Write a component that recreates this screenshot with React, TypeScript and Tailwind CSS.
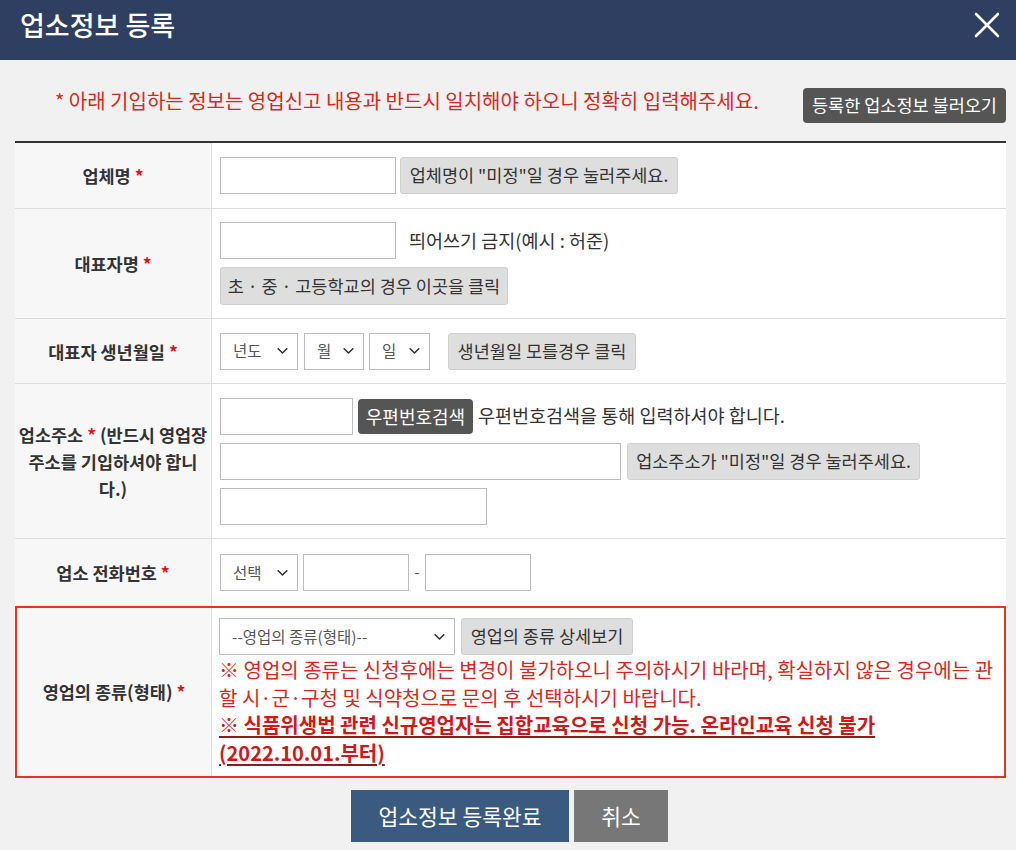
import React from "react";

const FONT = { fontFamily: '"Noto Sans CJK KR", "Noto Sans", sans-serif' };

function Chevron() {
  return (
    <svg className="pointer-events-none absolute right-[10px] top-1/2 -translate-y-1/2" width="11" height="7" viewBox="0 0 11 7">
      <path d="M1.2 1.2 L5.5 5.5 L9.8 1.2" fill="none" stroke="#333" strokeWidth="1.6" strokeLinecap="round" strokeLinejoin="round" />
    </svg>
  );
}

function Sel({ w, label }: { w: string; label: string }) {
  return (
    <div className={`relative h-[37px] ${w} shrink-0`}>
      <select
        className="h-full w-full appearance-none border border-[#bdbdbd] bg-white pl-[12px] text-[15.5px] text-[#555] outline-none"
        style={FONT}
        defaultValue={label}
      >
        <option>{label}</option>
      </select>
      <Chevron />
    </div>
  );
}

function Inp({ w }: { w: string }) {
  return <input className={`h-[37px] ${w} shrink-0 border border-[#bdbdbd] bg-white outline-none`} />;
}

function GBtn({ children, w }: { children: React.ReactNode; w: string }) {
  return (
    <button className={`h-[37px] ${w} shrink-0 whitespace-nowrap rounded-[3px] border border-[#cfcfcf] bg-[#dedede] text-[17.5px] text-[#333]`} style={FONT}>
      {children}
    </button>
  );
}

function Label({ children }: { children: React.ReactNode }) {
  return (
    <div className="flex w-[197px] shrink-0 items-center justify-center border-r border-[#dddddd] bg-[#f7f7f7] px-[3px] text-center text-[17.5px] font-bold leading-[27px] text-[#333]">
      <div>{children}</div>
    </div>
  );
}

const Star = () => <span className="text-[#e01515]">*</span>;

export default function App() {
  return (
    <div className="min-h-[850px] w-[1016px] bg-[#f1f1f1]" style={FONT}>
      {/* header */}
      <div className="flex h-[60px] items-center justify-between bg-[#2e3f62] pb-[10px] pl-[20px] pr-[16px]">
        <div className="text-[27px] font-medium text-white">업소정보 등록</div>
        <svg width="26" height="26" viewBox="0 0 26 26" className="mt-[-1px]">
          <path d="M2 2 L24 24 M24 2 L2 24" stroke="#fff" strokeWidth="2.6" strokeLinecap="round" />
        </svg>
      </div>

      <div className="pl-[15px] pr-[10px]">
        {/* notice */}
        <div className="flex h-[81px] items-end pb-[18px]">
          <div className="mb-[8px] whitespace-nowrap pl-[40px] text-[20px] leading-[28px] text-[#d8281e]">
            * 아래 기입하는 정보는 영업신고 내용과 반드시 일치해야 하오니 정확히 입력해주세요.
          </div>
          <button className="ml-auto h-[35px] w-[203px] whitespace-nowrap rounded-[4px] bg-[#555555] text-[17.5px] text-white" style={FONT}>
            등록한 업소정보 불러오기
          </button>
        </div>

        {/* table */}
        <div className="border-t-2 border-[#333]">
          {/* row 1 */}
          <div className="flex h-[66px] border-b border-[#dddddd] bg-white">
            <Label>
              업체명 <Star />
            </Label>
            <div className="flex flex-1 items-center gap-[4px] pl-[8px]">
              <Inp w="w-[176px]" />
              <GBtn w="w-[278px]">업체명이 "미정"일 경우 눌러주세요.</GBtn>
            </div>
          </div>

          {/* row 2 */}
          <div className="flex h-[110px] border-b border-[#dddddd] bg-white">
            <Label>
              대표자명 <Star />
            </Label>
            <div className="flex flex-1 flex-col justify-center gap-[8px] pl-[8px]">
              <div className="flex items-center gap-[13px]">
                <Inp w="w-[176px]" />
                <span className="text-[18.5px] text-[#333]">띄어쓰기 금지(예시 : 허준)</span>
              </div>
              <GBtn w="w-[288px] h-[38px]">초 · 중 · 고등학교의 경우 이곳을 클릭</GBtn>
            </div>
          </div>

          {/* row 3 */}
          <div className="flex h-[65px] border-b border-[#dddddd] bg-white">
            <Label>
              대표자 생년월일 <Star />
            </Label>
            <div className="flex flex-1 items-center pl-[8px]">
              <Sel w="w-[78px]" label="년도" />
              <div className="w-[6px]" />
              <Sel w="w-[60px]" label="월" />
              <div className="w-[5px]" />
              <Sel w="w-[61px]" label="일" />
              <div className="w-[18px]" />
              <GBtn w="w-[188px]">생년월일 모를경우 클릭</GBtn>
            </div>
          </div>

          {/* row 4 */}
          <div className="flex h-[155px] border-b border-[#dddddd] bg-white">
            <Label>
              업소주소 <Star /> (반드시 영업장 주소를 기입하셔야 합니다.)
            </Label>
            <div className="flex flex-1 flex-col justify-center gap-[8px] pl-[8px]">
              <div className="flex items-center">
                <Inp w="w-[133px]" />
                <button className="ml-[5px] h-[35px] w-[115px] whitespace-nowrap rounded-[4px] bg-[#555555] text-[18px] text-white" style={FONT}>
                  우편번호검색
                </button>
                <span className="ml-[5px] whitespace-nowrap text-[18.5px] text-[#333]">우편번호검색을 통해 입력하셔야 합니다.</span>
              </div>
              <div className="flex items-center gap-[6px]">
                <Inp w="w-[401px]" />
                <GBtn w="w-[293px]">업소주소가 "미정"일 경우 눌러주세요.</GBtn>
              </div>
              <Inp w="w-[267px]" />
            </div>
          </div>

          {/* row 5 */}
          <div className="flex h-[67px] bg-white">
            <Label>
              업소 전화번호 <Star />
            </Label>
            <div className="flex flex-1 items-center pl-[8px]">
              <Sel w="w-[78px]" label="선택" />
              <div className="w-[5px]" />
              <Inp w="w-[106px]" />
              <span className="w-[16px] text-center text-[15px] text-[#555]">-</span>
              <Inp w="w-[106px]" />
            </div>
          </div>

          {/* row 6 */}
          <div className="flex h-[172px] border-2 border-[#e8341c] bg-white">
            <div className="flex w-[195px] shrink-0 items-center justify-center border-r border-[#dddddd] bg-[#f7f7f7] text-[17.5px] font-bold text-[#333]">
              <div>
                영업의 종류(형태) <Star />
              </div>
            </div>
            <div className="flex-1 pl-[7px] pr-[4px] pt-[10px]">
              <div className="flex items-center gap-[6px]">
                <Sel w="w-[236px]" label="--영업의 종류(형태)--" />
                <GBtn w="w-[172px]">영업의 종류 상세보기</GBtn>
              </div>
              <div className="mt-[1px] text-[20px] leading-[27.7px] text-[#d8281e]">
                <div>※ 영업의 종류는 신청후에는 변경이 불가하오니 주의하시기 바라며, 확실하지 않은 경우에는 관할 시·군·구청 및 식약청으로 문의 후 선택하시기 바랍니다.</div>
                <div className="font-bold text-[#d01818] underline decoration-[#8a1c1c] decoration-[1.5px] underline-offset-[3px]">
                  ※ 식품위생법 관련 신규영업자는 집합교육으로 신청 가능. 온라인교육 신청 불가 (2022.10.01.부터)
                </div>
              </div>
            </div>
          </div>
        </div>

        {/* bottom buttons */}
        <div className="mt-[12px] flex justify-center gap-[5px] pr-[2px]">
          <button className="h-[52px] w-[218px] whitespace-nowrap bg-[#3b5a7f] text-[21.5px] text-white" style={FONT}>
            업소정보 등록완료
          </button>
          <button className="h-[52px] w-[94px] bg-[#777777] text-[21.5px] text-white" style={FONT}>
            취소
          </button>
        </div>
      </div>
    </div>
  );
}
